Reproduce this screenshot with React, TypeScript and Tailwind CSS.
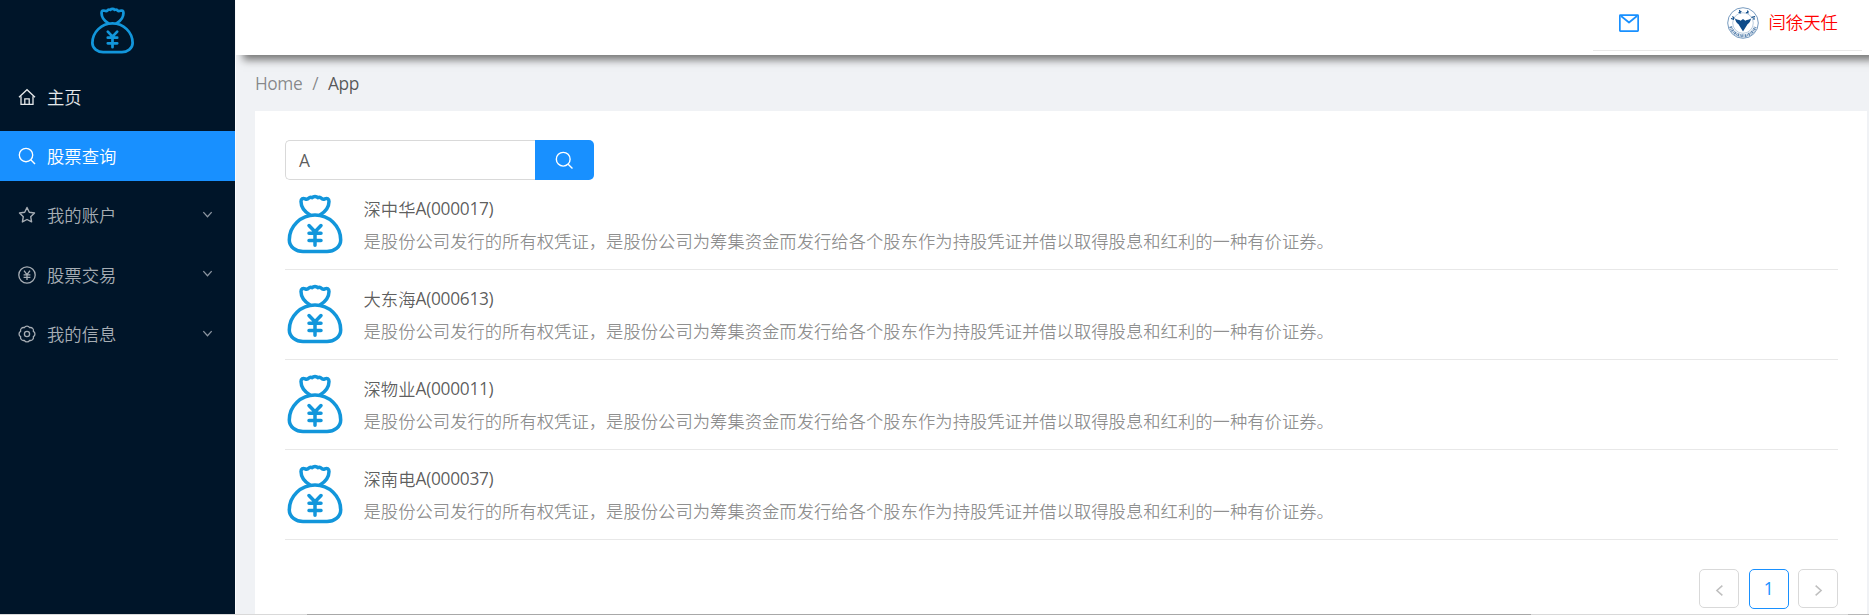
import React from "react";

const stocks = [
  { name: "深中华", code: "A(000017)" },
  { name: "大东海", code: "A(000613)" },
  { name: "深物业", code: "A(000011)" },
  { name: "深南电", code: "A(000037)" },
];

const description =
  "是股份公司发行的所有权凭证，是股份公司为筹集资金而发行给各个股东作为持股凭证并借以取得股息和红利的一种有价证券。";

type IconProps = { className?: string };

function HomeIcon({ className }: IconProps) {
  return (
    <svg viewBox="0 0 18 18" className={className} fill="none" stroke="currentColor" strokeWidth="1.300">
      <path d="M1 9.200L9 1.700L17 9.200" />
      <path d="M3 8.300V16.300H15V8.300M6.800 16.300V10.800H11.200V16.300" />
    </svg>
  );
}

function SearchIcon({ className }: IconProps) {
  return (
    <svg viewBox="0 0 18 18" className={className} fill="none" stroke="currentColor" strokeWidth="1.350">
      <circle cx="8" cy="8" r="6.700" />
      <path d="M12.800 12.800L17 17" />
    </svg>
  );
}

function StarIcon({ className }: IconProps) {
  return (
    <svg viewBox="0 0 18 18" className={className} fill="none" stroke="currentColor" strokeWidth="1.400" strokeLinejoin="round">
      <path d="M9 1.500L11.300 6.200L16.500 7L12.700 10.700L13.600 15.900L9 13.500L4.400 15.900L5.300 10.700L1.500 7L6.700 6.200Z" />
    </svg>
  );
}

function YuanIcon({ className }: IconProps) {
  return (
    <svg viewBox="0 0 18 18" className={className} fill="none" stroke="currentColor" strokeWidth="1.300">
      <circle cx="9" cy="9" r="8.200" />
      <path d="M6 4.600L9 8.600L12 4.600M9 8.600V14M5.600 8.900H12.400M5.600 11.300H12.400" />
    </svg>
  );
}

function GearIcon({ className }: IconProps) {
  return (
    <svg viewBox="0 0 18 18" className={className} fill="none" stroke="currentColor" strokeWidth="1.300" strokeLinejoin="round">
      <circle cx="9" cy="9" r="2.600" />
      <path d="M15.370 6.360A3 3 0 0 1 15.370 11.640A3 3 0 0 1 11.640 15.370A3 3 0 0 1 6.360 15.370A3 3 0 0 1 2.630 11.640A3 3 0 0 1 2.630 6.360A3 3 0 0 1 6.360 2.630A3 3 0 0 1 11.640 2.630A3 3 0 0 1 15.370 6.360Z" />
    </svg>
  );
}

function MailIcon({ className }: IconProps) {
  return (
    <svg viewBox="0 0 20 18" className={className} fill="none" stroke="currentColor" strokeWidth="1.700" strokeLinejoin="round">
      <rect x=".85" y="1.200" width="18.300" height="15.900" rx=".5" />
      <path d="M2 2L10 8.500L18 2" />
    </svg>
  );
}

function Chevron({ className }: IconProps) {
  return (
    <svg viewBox="0 0 10 10" className={className} fill="none" stroke="currentColor" strokeWidth="1.200">
      <path d="M1.200 2.800L5 7L8.800 2.800" />
    </svg>
  );
}

const menu = [
  { label: "主页", Icon: HomeIcon, tone: "text-white/90", arrow: false },
  { label: "股票查询", Icon: SearchIcon, tone: "bg-[#1890ff] text-white", arrow: false },
  { label: "我的账户", Icon: StarIcon, tone: "text-[#a6adb4]", arrow: true },
  { label: "股票交易", Icon: YuanIcon, tone: "text-[#a6adb4]", arrow: true },
  { label: "我的信息", Icon: GearIcon, tone: "text-[#a6adb4]", arrow: true },
];

function MoneyBag({ className }: IconProps) {
  return (
    <svg viewBox="0 0 60 60" className={className} fill="none" stroke="#1296db" strokeWidth="3.500" strokeLinecap="round" strokeLinejoin="round">
      <path d="M25 21C18.500 17 16 12 16 7.500C16 4.800 17.800 3.900 20.200 4.900C21.600 5.600 22.800 5.300 23.700 4.200C24.700 3.100 26 3.100 27.200 3.700C28.600 2 31.400 2 32.800 3.700C34 3.100 35.300 3.100 36.300 4.200C37.200 5.300 38.400 5.600 39.800 4.900C42.200 3.900 44 4.800 44 7.500C44 12 41.500 17 35 21" />
      <path d="M30 21C44 21 55.700 32 55.700 46C55.700 53 49 57.600 42 57.600H18C11 57.600 4.300 53 4.300 46C4.300 32 16 21 30 21Z" />
      <path d="M24 31.500L30 37.800L36 31.500M30 38V51.300M24 39.200H36M24 46.400H36" />
    </svg>
  );
}

function Crest() {
  return (
    <svg viewBox="0 0 32 32" className="size-8" fill="none" stroke="#0f4c8a">
      <circle cx="16" cy="16" r="15.300" strokeWidth=".8" stroke="#5581ae" />
      <circle cx="16" cy="16" r="10.300" strokeWidth=".6" stroke="#8aa9c8" />
      <path d="M3.600 19.500A12.900 12.900 0 0 0 28.400 19.500" strokeWidth="3" strokeDasharray="1.600 .7 .8 .6" strokeOpacity=".65" />
      <path d="M4 11.500l3 .8M5.500 9.300l1.800 2.400M12.500 3l.8 3.500M11.500 5.500l3-1M19 6l2.600-1.500M20.500 3.500l.6 3M24.500 10.300l3.600-.6M26 11.800l2 .2" strokeWidth="1.200" />
      <path d="M8 11.500c1.800 1.300 4 1 5.600 2.200L16 12l2.400 1.700c1.600-1.200 3.800-.9 5.600-2.200-.3 2.500-1.800 4.600-3.500 5.800L16 24.500l-4.500-7.200C9.800 16.100 8.300 14 8 11.500z" fill="#0f4c8a" stroke="none" />
    </svg>
  );
}

export default function App() {
  return (
    <div className="flex h-[615px] w-full flex-col overflow-hidden bg-[#f0f2f5] font-['Open_Sans','Noto_Sans_CJK_SC',sans-serif] text-[17.33px]">
      <div className="flex min-h-0 flex-1">
        <aside className="flex w-[235px] shrink-0 flex-col bg-[#001529]">
          <div className="flex h-[71.7px] justify-center pt-[6.500px] pr-[11px]">
            <MoneyBag className="h-[47px] w-[47px]" />
          </div>
          <nav className="flex flex-col gap-[9.4px]">
            {menu.map(({ label, Icon, tone, arrow }) => (
              <div key={label} className={`flex h-[50px] items-center pr-[22px] pl-[18px] font-[350] ${tone}`}>
                <Icon className="size-[18px] shrink-0" />
                <span className="ml-[11px] flex-1 font-['Noto_Sans_CJK_SC',sans-serif]">{label}</span>
                {arrow && <Chevron className="mb-[2px] size-[11px] text-[#8b95a0]" />}
              </div>
            ))}
          </nav>
        </aside>

        <div className="flex min-w-0 flex-1 flex-col border-l border-white/80">
          <header className="z-10 flex h-[55px] shrink-0 justify-end bg-white pr-[7px] shadow-[7px_5px_8px_#777]">
            <div className="flex h-[51px] w-[269px] items-center border-b border-[#e8e8e8] pb-[4px] pl-[26px]">
              <MailIcon className="h-[18px] w-5 text-[#1890ff]" />
              <div className="ml-[88px] flex items-center gap-[9.5px]">
                <Crest />
                <span className="pb-[2px] font-['Noto_Sans_CJK_SC',sans-serif] font-[350] text-[#ff0000]">闫徐天任</span>
              </div>
            </div>
          </header>

          <div className="flex h-14 shrink-0 items-center pt-[2px] pl-[19px] tracking-[-0.45px] text-black/45">
            <span>Home</span>
            <span className="mx-[10px]">/</span>
            <span className="text-black/65">App</span>
          </div>

          <main className="mr-[2px] ml-[19px] flex flex-1 flex-col bg-white pt-[29px] pr-[29px] pl-[30px]">
            <div className="flex h-10 w-[309px] shrink-0">
              <div className="flex flex-1 items-center rounded-l-[5px] border border-r-0 border-[#d9d9d9] pt-[2px] pl-[13px] text-black/65">A</div>
              <button className="flex w-[59px] items-center justify-center rounded-r-[5px] bg-[#1890ff] text-white">
                <SearchIcon className="size-[18.5px]" />
              </button>
            </div>

            <ul className="shrink-0">
              {stocks.map((stock) => (
                <li key={stock.code} className="flex h-[90px] border-b border-[#e8e8e8] pt-[14px]">
                  <MoneyBag className="-ml-[0.5px] size-[60px] shrink-0" />
                  <div className="ml-[19px]">
                    <h4 className="flex h-[29px] items-center pt-px font-normal text-black/65">
                      <span className="font-['Noto_Sans_CJK_SC',sans-serif] font-[350]">{stock.name}</span>
                      <span className="tracking-[-0.3px]">{stock.code}</span>
                    </h4>
                    <p className="mt-[3px] flex h-[29px] items-center font-['Noto_Sans_CJK_SC',sans-serif] font-[350] whitespace-nowrap text-black/45">
                      {description}
                    </p>
                  </div>
                </li>
              ))}
            </ul>

            <div className="mt-[29px] flex shrink-0 justify-end gap-[9.3px]">
              <div className="flex h-[39px] w-[40px] items-center justify-center rounded-[5px] border border-[#d9d9d9] pt-[3px] text-black/25">
                <Chevron className="size-[13px] rotate-90" />
              </div>
              <div className="flex h-[40px] w-[40px] items-center justify-center rounded-[5px] border border-[#1890ff] text-[#1890ff]">1</div>
              <div className="flex h-[39px] w-[40px] items-center justify-center rounded-[5px] border border-[#d9d9d9] pt-[3px] text-black/25">
                <Chevron className="size-[13px] -rotate-90" />
              </div>
            </div>
          </main>
        </div>
      </div>
      <div className="flex h-px shrink-0 bg-[#d9d9d9]">
        <div className="ml-[307px] w-[1224px] bg-[#a8a8a8]" />
        <div className="ml-auto w-[21px] bg-[#b8b8b8]" />
      </div>
    </div>
  );
}
